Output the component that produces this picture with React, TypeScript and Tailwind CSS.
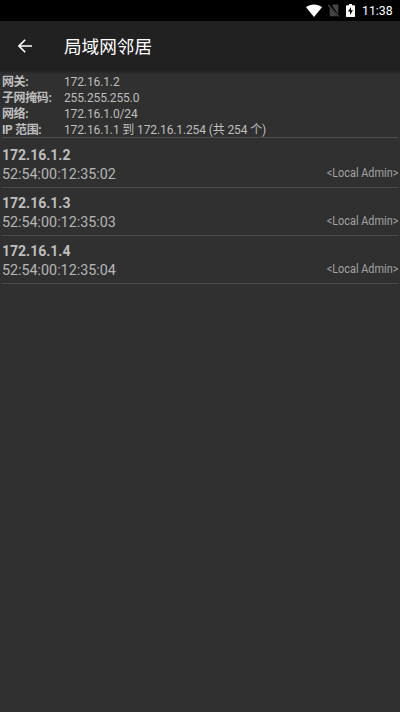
const hosts = [
  { ip: '172.16.1.2', mac: '52:54:00:12:35:02' },
  { ip: '172.16.1.3', mac: '52:54:00:12:35:03' },
  { ip: '172.16.1.4', mac: '52:54:00:12:35:04' },
];

const info = [
  ['网关:', '172.16.1.2'],
  ['子网掩码:', '255.255.255.0'],
  ['网络:', '172.16.1.0/24'],
  ['IP 范围:', '172.16.1.1 到 172.16.1.254 (共 254 个)'],
];

function StatusBar() {
  return (
    <div className="flex h-[21px] items-center justify-end bg-black pr-[7px] text-white">
      <svg className="mr-[6px] h-[13px] w-[16px]" viewBox="0 0 16 13" fill="currentColor">
        <path d="M0 3.2C4.6-.5 11.4-.5 16 3.2L8 13z" />
      </svg>
      <svg className="mr-[7px] h-[13px] w-[11px]" viewBox="0 0 11 13">
        <path d="M1.7 3.4v8.9h7.6zM4 1.6L5.2.5h5.1v10z" fill="#454545" />
        <path d="M.3 1L10.7 12.5" stroke="#555555" strokeWidth="1.1" />
      </svg>
      <svg className="mr-[7px] h-[13px] w-[9px]" viewBox="0 0 9 13">
        <path d="M3 0h3v1.3h2.2q.8 0 .8.8v10.1q0 .8-.8.8H.8q-.8 0-.8-.8V2.1q0-.8.8-.8H3z" fill="white" />
        <path d="M5 3L2 7.6h2V11l3-4.8H5z" fill="black" />
      </svg>
      <span className="w-[31px] whitespace-nowrap pt-[2px] text-[12.3px] leading-none">11:38</span>
    </div>
  );
}

export default function App() {
  return (
    <div className="flex h-[712px] w-[400px] flex-col overflow-hidden bg-[#303030] font-[Roboto,'Noto_Sans_CJK_SC',sans-serif]">
      <StatusBar />
      <header className="z-10 flex h-[50px] items-center bg-[#212121] pl-[18px] text-white shadow-[0_1px_3px_rgba(0,0,0,0.35)]">
        <svg className="mr-[32px] h-[14px] w-[14px]" viewBox="0 0 14 14" fill="none" stroke="currentColor" strokeWidth="1.6">
          <path d="M14 7H1.3M7.2.8L1 7l6.2 6.2" />
        </svg>
        <h1 className="pt-[2px] text-[17.6px] leading-6">局域网邻居</h1>
      </header>
      <main className="px-[2px] pt-[3px] text-[#bebebe]">
        <dl className="h-[64px] border-b border-[#4c4c4c] text-[12px] leading-4">
          {info.map(([label, value]) => (
            <div key={label} className="flex h-4 whitespace-nowrap">
              <dt className="w-[62px] font-bold tracking-[-0.4px]">{label}</dt>
              <dd className="tracking-[-0.12px]">{value}</dd>
            </div>
          ))}
        </dl>
        <ul className="pt-[2px]">
          {hosts.map((h) => (
            <li key={h.ip} className="flex h-12 items-start justify-between border-b border-[#4c4c4c] pt-[5px]">
              <div>
                <div className="text-[14px] font-bold leading-[20px]">{h.ip}</div>
                <div className="text-[14.3px] leading-[18px] text-[#b6b6b6]">{h.mac}</div>
              </div>
              <div className="flex w-[72px] justify-end pt-[19px]">
                <span className="origin-right scale-x-[0.87] whitespace-nowrap text-[12.5px] leading-[17px] text-[#a2a2a2]">&lt;Local Admin&gt;</span>
              </div>
            </li>
          ))}
        </ul>
      </main>
    </div>
  );
}
